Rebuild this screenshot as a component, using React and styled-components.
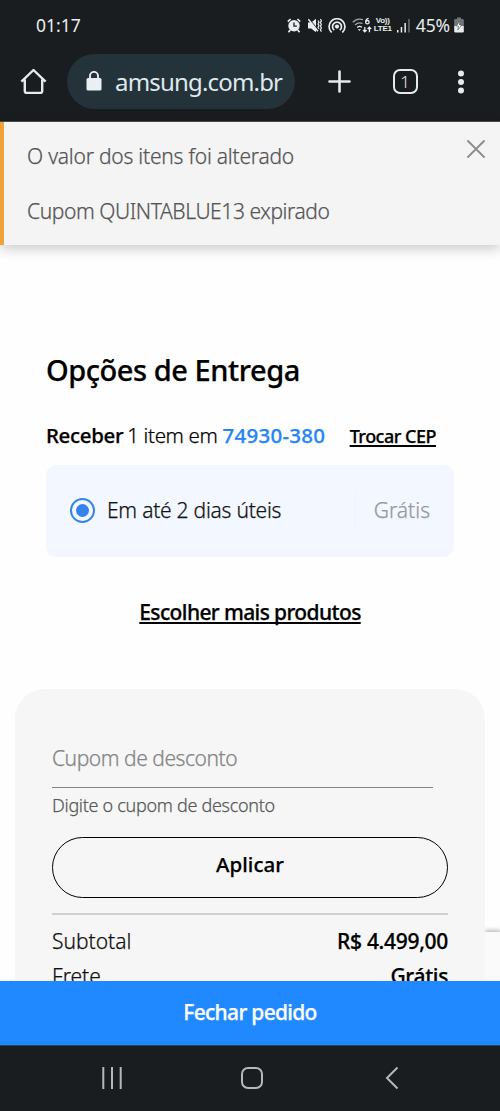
import React from "react";
import styled, { createGlobalStyle } from "styled-components";

const GlobalStyle = createGlobalStyle`
  * { box-sizing: border-box; }
  body {
    margin: 0;
    background: #fff;
    font-family: "Noto Sans", "Open Sans", sans-serif;
    font-weight: 300;
    -webkit-text-stroke: 0.25px currentColor;
    color: #000;
  }
  button { font: inherit; color: inherit; background: none; border: 0; padding: 0; margin: 0; }
  h2, p { margin: 0; }
  svg { display: block; flex: none; }
`;

const Screen = styled.div`
  width: 500px;
  height: 1111px;
  display: flex;
  flex-direction: column;
  overflow: hidden;
  background: #fefefe;
`;

/* System status bar */
const StatusBar = styled.header`
  flex: none;
  height: 51px;
  padding: 0 36px 1px;
  display: flex;
  justify-content: space-between;
  align-items: center;
  background: #191d20;
  color: #e9edef;
  -webkit-text-stroke: 0;
`;

const Clock = styled.span`
  font-size: 17.5px;
  font-weight: 400;
  line-height: 24px;
  letter-spacing: ${(p) => p.$tracking || 0}px;
`;

const StatusIcons = styled.div`
  display: flex;
  align-items: center;
  color: #e9edef;
`;

const StatusSlot = styled.span`
  display: flex;
  margin-left: ${(p) => p.$gap}px;
`;

const Volte = styled.span`
  display: flex;
  flex-direction: column;
  align-items: center;
  width: 18px;
  margin-left: 2px;
  font-family: "Liberation Sans", sans-serif;
  font-size: 8px;
  font-weight: 700;
  line-height: 8px;
  letter-spacing: -0.2px;
  white-space: nowrap;
`;

/* Browser toolbar */
const BrowserBar = styled.nav`
  flex: none;
  height: 71px;
  padding: 3px 33px 12px 20px;
  display: flex;
  align-items: center;
  background: #191d20;
  color: #e4eaed;
  border-bottom: 1px solid #4a4c4e;
  -webkit-text-stroke: 0;
`;

const ToolButton = styled.button`
  display: flex;
  align-items: center;
  justify-content: center;
  width: ${(p) => p.$width}px;
  margin-left: ${(p) => p.$gap || 0}px;
`;

const AddressPill = styled.div`
  width: 228px;
  height: 55px;
  margin-left: 20px;
  padding-left: 19px;
  display: flex;
  align-items: center;
  border-radius: 28px;
  background: #24323a;
`;

const Address = styled.span`
  margin-left: 13px;
  font-size: 24px;
  font-weight: 400;
  line-height: 32px;
  letter-spacing: -0.82px;
  color: #dfe8ec;
`;

const TabCount = styled.span`
  display: flex;
  align-items: center;
  justify-content: center;
  width: 25px;
  height: 25px;
  border: 2.4px solid #e4eaed;
  border-radius: 7px;
  font-size: 17px;
  line-height: 20px;
`;

/* Notice */
const Notice = styled.section`
  position: relative;
  z-index: 1;
  flex: none;
  height: 123px;
  padding: 20px 15px 0 23px;
  display: flex;
  justify-content: space-between;
  align-items: flex-start;
  border-left: 4px solid #efa236;
  background: #f4f4f4;
  box-shadow: 0 4px 12px rgba(0, 0, 0, 0.2);
`;

const Messages = styled.div`
  display: flex;
  flex-direction: column;
  gap: 27px;
`;

const Message = styled.p`
  font-size: 21px;
  line-height: 28px;
  letter-spacing: ${(p) => p.$tracking}px;
  color: #555;
  white-space: nowrap;
`;

const CloseButton = styled.button`
  margin-top: -2px;
`;

/* Page content */
const Page = styled.main`
  flex: 1;
  min-height: 0;
  overflow: hidden;
  position: relative;
`;

const Delivery = styled.section`
  padding: 106px 46px 0;
`;

const Title = styled.h2`
  font-size: 29px;
  font-weight: 500;
  line-height: 38px;
  letter-spacing: -0.45px;
  white-space: nowrap;
`;

const ReceiveRow = styled.div`
  margin-top: 32px;
  height: 28px;
  display: flex;
  align-items: baseline;
  font-size: 20.5px;
  line-height: 28px;
  white-space: nowrap;
`;

const Strong = styled.span`
  font-weight: 500;
  letter-spacing: -0.35px;
`;

const ItemCount = styled.span`
  margin-left: 4px;
  letter-spacing: -0.35px;
`;

const PostalCode = styled.span`
  margin-left: 5px;
  font-weight: 500;
  letter-spacing: 0.25px;
  color: #2486f5;
`;

const TextLink = styled.a`
  font-size: ${(p) => p.$size}px;
  font-weight: 500;
  line-height: 28px;
  letter-spacing: ${(p) => p.$tracking}px;
  text-decoration: underline;
  text-decoration-thickness: 1.5px;
  text-underline-offset: 2px;
  text-decoration-skip-ink: none;
  white-space: nowrap;
`;

const ChangeLink = styled(TextLink)`
  margin-left: auto;
  margin-right: 18px;
`;

const OptionCard = styled.label`
  margin-top: 16px;
  height: 92px;
  padding: 0 24px 2px;
  display: flex;
  align-items: center;
  border-radius: 10px;
  background: #f3f7ff;
  font-size: 21px;
  line-height: 28px;
  white-space: nowrap;
`;

const Radio = styled.span`
  width: 25px;
  height: 25px;
  display: grid;
  place-items: center;
  border: 2px solid #3484ea;
  border-radius: 50%;

  &::before {
    content: "";
    width: 13px;
    height: 13px;
    border-radius: 50%;
    background: #3484ea;
  }
`;

const OptionName = styled.span`
  margin-left: 12px;
  letter-spacing: -0.24px;
  color: #101214;
`;

const OptionPrice = styled.span`
  margin-left: auto;
  height: 34px;
  padding-left: 18px;
  display: flex;
  align-items: center;
  border-left: 1px solid #edf2fc;
  color: #96999e;
`;

const MoreProducts = styled.div`
  margin-top: 41px;
  display: flex;
  justify-content: center;
`;

const Summary = styled.section`
  margin: 63px 15px 0;
  height: 420px;
  padding: 55px 37px 0;
  border-radius: 30px;
  background: #f6f6f6;
`;

const CouponField = styled.div`
  width: 381px;
  height: 44px;
  border-bottom: 1.5px solid #858585;
  font-size: 21px;
  line-height: 28px;
  letter-spacing: -0.46px;
  color: #858585;
`;

const Hint = styled.p`
  margin-top: 4px;
  font-size: 18px;
  line-height: 26px;
  letter-spacing: -0.3px;
  color: #5a5a5a;
`;

const ApplyButton = styled.button`
  width: 396px;
  height: 61px;
  margin-top: 19px;
  padding-bottom: 7px;
  display: flex;
  align-items: center;
  justify-content: center;
  border: 1.5px solid #000;
  border-radius: 31px;
  font-size: 20.5px;
  font-weight: 500;
  letter-spacing: 0.05px;
`;

const Totals = styled.div`
  margin-top: 15px;
  padding-top: 12px;
  display: flex;
  flex-direction: column;
  gap: 7px;
  border-top: 2px solid #d0d0d0;
`;

const TotalRow = styled.div`
  display: flex;
  justify-content: space-between;
  font-size: 21px;
  line-height: 28px;
  color: #101010;
`;

const Amount = styled.span`
  font-weight: 500;
  letter-spacing: ${(p) => p.$tracking}px;
  color: #000;
`;

const Badge = styled.aside`
  position: absolute;
  right: 0;
  bottom: 0;
  width: 15px;
  height: 49px;
  background: #fafafa;
  box-shadow: 0 0 5px 1px rgba(0, 0, 0, 0.35);
  clip-path: inset(-6px 0 0 0);
`;

const Checkout = styled.button`
  flex: none;
  height: 64px;
  padding-bottom: 2px;
  display: flex;
  align-items: center;
  justify-content: center;
  background: #2189ff;
  color: #fff;
  font-size: 21px;
  font-weight: 500;
  line-height: 28px;
  letter-spacing: -0.7px;
`;

const SystemNav = styled.footer`
  flex: none;
  height: 66px;
  padding: 0 101px 2px 100px;
  display: flex;
  align-items: center;
  justify-content: space-between;
  border-top: 1px solid #2d4660;
  background: #191d20;
`;

const HomeKey = styled.button`
  margin-right: 6px;
`;

const AlarmIcon = () => (
  <svg width="14" height="15" viewBox="0 0 14 15" fill="none" stroke="currentColor">
    <circle cx="7" cy="7.8" r="5.7" fill="currentColor" stroke="none" />
    <path d="M.8 3.6 3.6 1M13.2 3.6 10.4 1" strokeWidth="1.7" />
    <path d="M3.2 12 1.5 14.2M10.800 12l1.700 2.2" strokeWidth="1.8" />
    <path d="M7 4.500v3.600h2.800" stroke="#191d20" strokeWidth="1.300" />
  </svg>
);

const MuteIcon = () => (
  <svg width="14" height="15" viewBox="0 0 14 15" fill="none" stroke="currentColor">
    <path d="M0 4.600h3.200L8 .8v13.400l-4.800-3.800H0z" fill="currentColor" stroke="none" />
    <path d="M1 .8 10.800 12.800" stroke="#191d20" strokeWidth="1.200" />
    <path d="M.3 1.200 9.900 13.300" strokeWidth="1.500" />
    <path d="M10 2.500l1 1.700-1 1.700 1 1.700-1 1.700 1 1.700M12.400 1l1 1.800-1 1.800 1 1.800-1 1.800 1 1.800-1 1.800 1 1.800" strokeWidth="1.200" />
  </svg>
);

const HotspotIcon = () => (
  <svg width="18" height="15" viewBox="0 0 18 15" fill="none" stroke="currentColor" strokeWidth="1.700">
    <circle cx="9" cy="8.600" r="2.100" fill="currentColor" stroke="none" />
    <path d="M6.200 12.200a4.500 4.500 0 1 1 5.600 0" />
    <path d="M3.700 14.500a7.900 7.900 0 1 1 10.600 0" />
  </svg>
);

const WifiIcon = () => (
  <svg width="20" height="16" viewBox="0 0 20 16" fill="none" stroke="currentColor" strokeWidth="1.300">
    <path d="M.8 5.200C3.500 2.300 7.500 1.500 11 2.700M3 8c2-2 5-2.600 7.600-1.500" opacity=".65" />
    <path d="M5.200 10.500c1.200-1.100 3.300-1.300 4.700-.3" />
    <path d="M5.800 12.200h3.200L7.400 14z" fill="currentColor" stroke="none" />
    <path d="M16.600 1.300c-2 .2-2.800 1.500-2.800 3.500" strokeWidth="1.300" />
    <circle cx="15.400" cy="5.200" r="1.700" strokeWidth="1.300" />
    <path d="M12.800 10v4.800m-1.800-1.800 1.800 1.800 1.800-1.800M17.400 15.200v-5m-1.800 1.800 1.800-1.800 1.800 1.800" strokeWidth="1.300" />
  </svg>
);

const SignalIcon = () => (
  <svg width="13" height="15" viewBox="0 0 13 15" fill="currentColor">
    <path d="M0 12h1.500v2.500H0zM3.700 9h1.500v5.500H3.700zM7.400 5h1.500v9.500H7.400z" />
    <path d="M11.200 1h1.500v13.500h-1.500z" opacity=".4" />
  </svg>
);

const BatteryIcon = () => (
  <svg width="10" height="16" viewBox="0 0 10 16">
    <path d="M3 .5h4V2H8.500q1.300 0 1.300 1.300V9H.2V3.300Q.2 2 1.500 2H3z" fill="#73777a" />
    <path d="M.2 9h9.600v5.200q0 1.300-1.300 1.300h-7Q.2 15.500.2 14.200z" fill="#e9edef" />
    <path d="M6 3.800 2.300 9h2.200l-.6 4L7.700 7.900H5.400z" fill="#fff" stroke="#4a4f52" strokeWidth=".6" />
  </svg>
);

const HomeIcon = () => (
  <svg width="27" height="27" viewBox="0 0 27 27" fill="none" stroke="currentColor" strokeWidth="2.400" strokeLinejoin="round">
    <path d="M1.400 13.700 13.500 2l12.100 11.700M4.800 11.500V23q0 1.900 1.900 1.900h13.600q1.900 0 1.900-1.900V11.500" />
  </svg>
);

const LockIcon = () => (
  <svg width="16" height="21" viewBox="0 0 16 21">
    <rect x=".5" y="7" width="15" height="12.500" rx="1.500" fill="#e9eff2" />
    <path d="M4 7.500V4.900a4 4 0 0 1 8 0v2.600" fill="none" stroke="#e9eff2" strokeWidth="1.900" />
  </svg>
);

const PlusIcon = () => (
  <svg width="23" height="23" viewBox="0 0 23 23" stroke="currentColor" strokeWidth="2.600" strokeLinecap="round">
    <path d="M11.500 1.500v20M1.500 11.500h20" />
  </svg>
);

const MoreIcon = () => (
  <svg width="6" height="24" viewBox="0 0 6 24" fill="currentColor">
    <circle cx="3" cy="3.500" r="3" />
    <circle cx="3" cy="12" r="3" />
    <circle cx="3" cy="20.500" r="3" />
  </svg>
);

const CloseIcon = () => (
  <svg width="18" height="18" viewBox="0 0 18 18" stroke="#8c8c8c" strokeWidth="1.800" strokeLinecap="round">
    <path d="M1 1l16 16M17 1 1 17" />
  </svg>
);

const RecentsIcon = () => (
  <svg width="24" height="22" viewBox="0 0 24 22" stroke="#b3b8bb" strokeWidth="2">
    <path d="M3.300 0v22M12 0v22M20.700 0v22" />
  </svg>
);

const HomeKeyIcon = () => (
  <svg width="24" height="24" viewBox="0 0 24 24" fill="none" stroke="#b3b8bb" strokeWidth="2">
    <rect x="2" y="2" width="20" height="20" rx="6" />
  </svg>
);

const BackIcon = () => (
  <svg width="14" height="24" viewBox="0 0 14 24" fill="none" stroke="#b3b8bb" strokeWidth="2">
    <path d="M12.500 1.500 2 12l10.500 10.500" />
  </svg>
);

export default function App() {
  return (
    <Screen>
      <GlobalStyle />
      <StatusBar>
        <Clock>01:17</Clock>
        <StatusIcons>
          <StatusSlot><AlarmIcon /></StatusSlot>
          <StatusSlot $gap={7}><MuteIcon /></StatusSlot>
          <StatusSlot $gap={6}><HotspotIcon /></StatusSlot>
          <StatusSlot $gap={6}><WifiIcon /></StatusSlot>
          <Volte><span>Vo))</span><span>LTE1</span></Volte>
          <StatusSlot $gap={5}><SignalIcon /></StatusSlot>
          <StatusSlot $gap={6}><Clock $tracking={-0.1}>45%</Clock></StatusSlot>
          <StatusSlot $gap={4}><BatteryIcon /></StatusSlot>
        </StatusIcons>
      </StatusBar>
      <BrowserBar>
        <ToolButton $width={27} aria-label="Início"><HomeIcon /></ToolButton>
        <AddressPill>
          <LockIcon />
          <Address>amsung.com.br</Address>
        </AddressPill>
        <ToolButton $width={24} $gap={32} aria-label="Nova guia"><PlusIcon /></ToolButton>
        <ToolButton $width={26} $gap={41} aria-label="Guias"><TabCount>1</TabCount></ToolButton>
        <ToolButton $width={6} $gap={40} aria-label="Mais"><MoreIcon /></ToolButton>
      </BrowserBar>
      <Notice>
        <Messages>
          <Message $tracking={-0.22}>O valor dos itens foi alterado</Message>
          <Message $tracking={-0.42}>Cupom QUINTABLUE13 expirado</Message>
        </Messages>
        <CloseButton aria-label="Fechar"><CloseIcon /></CloseButton>
      </Notice>
      <Page>
        <Delivery>
          <Title>Opções de Entrega</Title>
          <ReceiveRow>
            <Strong>Receber</Strong>
            <ItemCount>1 item em</ItemCount>
            <PostalCode>74930-380</PostalCode>
            <ChangeLink $size={18} $tracking={-0.5}>Trocar CEP</ChangeLink>
          </ReceiveRow>
          <OptionCard>
            <Radio />
            <OptionName>Em até 2 dias úteis</OptionName>
            <OptionPrice>Grátis</OptionPrice>
          </OptionCard>
          <MoreProducts>
            <TextLink $size={21} $tracking={-0.62}>Escolher mais produtos</TextLink>
          </MoreProducts>
        </Delivery>
        <Summary>
          <CouponField>Cupom de desconto</CouponField>
          <Hint>Digite o cupom de desconto</Hint>
          <ApplyButton>Aplicar</ApplyButton>
          <Totals>
            <TotalRow><span>Subtotal</span><Amount $tracking={-0.3}>R$ 4.499,00</Amount></TotalRow>
            <TotalRow><span>Frete</span><Amount $tracking={-0.35}>Grátis</Amount></TotalRow>
          </Totals>
        </Summary>
        <Badge />
      </Page>
      <Checkout>Fechar pedido</Checkout>
      <SystemNav>
        <RecentsIcon />
        <HomeKey aria-label="Tela inicial"><HomeKeyIcon /></HomeKey>
        <BackIcon />
      </SystemNav>
    </Screen>
  );
}
